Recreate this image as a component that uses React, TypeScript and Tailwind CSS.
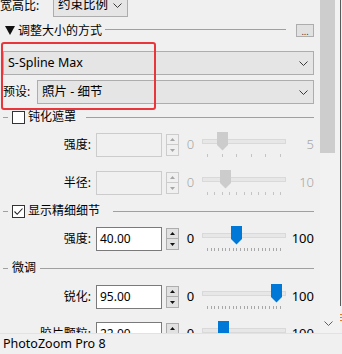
import React from 'react';

const FONT = "font-['Noto_Sans','Noto_Sans_CJK_SC',sans-serif]";

function Chevron({ color = '#3a3a3a' }: { color?: string }) {
  return (
    <svg width="9" height="5" viewBox="0 0 9 5" className="shrink-0">
      <path d="M0.5 0.5 L4.5 4.5 L8.5 0.5" fill="none" stroke={color} strokeWidth="1" />
    </svg>
  );
}

function Select({ text, className = '' }: { text: string; className?: string }) {
  return (
    <div className={`flex items-center border border-[#adadad] bg-[#e5e5e5] pl-[4px] pr-[5px] ${className}`}>
      <span className="flex-1 truncate text-[12.5px] text-black">{text}</span>
      <Chevron />
    </div>
  );
}

function Checkbox({ checked }: { checked?: boolean }) {
  return (
    <div className="w-[13px] h-[13px] shrink-0 border border-[#333] bg-white flex items-center justify-center">
      {checked && (
        <svg width="11" height="11" viewBox="0 0 11 11">
          <path d="M1.5 5.5 L4.2 8.3 L9.5 2.5" fill="none" stroke="#222" strokeWidth="1.1" />
        </svg>
      )}
    </div>
  );
}

function Group({ label, checkbox, checked, gap, className = '' }: { label: string; checkbox?: boolean; checked?: boolean; gap: string; className?: string }) {
  return (
    <div className={`flex items-center h-[14px] ${className}`}>
      <div className="ml-[3px] w-[5px] h-px bg-[#a0a0a0] shrink-0" />
      {checkbox ? (
        <>
          <div className="ml-[4px]">
            <Checkbox checked={checked} />
          </div>
          <span className="ml-[3px] text-[12px] text-black whitespace-nowrap">{label}</span>
        </>
      ) : (
        <span className="ml-[4px] text-[12px] text-black whitespace-nowrap">{label}</span>
      )}
      <div className={`${gap} flex-1 h-px bg-[#a0a0a0]`} />
    </div>
  );
}

function Spinner({ disabled }: { disabled?: boolean }) {
  const border = disabled ? 'border-[#cccccc] bg-[#f0f0f0]' : 'border-[#adadad] bg-[#e1e1e1]';
  const fill = disabled ? '#a6a6a6' : '#111';
  return (
    <div className="ml-[4px] w-[13px] h-[22px] flex flex-col shrink-0">
      <div className={`h-[11px] border ${border} flex items-center justify-center`}>
        <svg width="5" height="3" viewBox="0 0 5 3">
          <polygon points="2.5,0 5,3 0,3" fill={fill} />
        </svg>
      </div>
      <div className={`h-[11px] border border-t-0 ${border} flex items-center justify-center`}>
        <svg width="5" height="3" viewBox="0 0 5 3">
          <polygon points="0,0 5,0 2.5,3" fill={fill} />
        </svg>
      </div>
    </div>
  );
}

interface SliderRowProps {
  label: string;
  value: string;
  disabled?: boolean;
  max: number;
  val: number;
  ticks: number;
  className?: string;
}

function SliderRow({ label, value, disabled, max, val, ticks, className = '' }: SliderRowProps) {
  const thumbLeft = (val / max) * 73;
  const thumbColor = disabled ? '#cccccc' : '#0078d7';
  const numColor = disabled ? 'text-[#a6a6a6] font-light' : 'text-black';
  return (
    <div className={`flex items-center h-[24px] ${className}`}>
      <span className="w-[91px] shrink-0 text-right text-[12px] text-black whitespace-nowrap">{label}</span>
      <div
        className={`ml-[5px] w-[66px] h-[24px] shrink-0 flex items-center pl-[3px] text-[12px] text-black border ${
          disabled ? 'border-[#cccccc] bg-[#f0f0f0]' : 'border-[#7a7a7a] bg-white'
        }`}
      >
        {value}
      </div>
      <Spinner disabled={disabled} />
      <span className={`w-[23px] shrink-0 text-center text-[13px] ${numColor}`}>0</span>
      <div className="relative w-[84px] h-[24px] shrink-0">
        <div className="absolute left-0 right-0 top-[6px] h-[5px] bg-[#e7e7e7] border border-[#d9d9d9]" />
        {Array.from({ length: ticks + 1 }).map((_, i) => (
          <div
            key={i}
            className={`absolute top-[21px] w-px h-[3px] ${disabled ? 'bg-[#c4c4c4]' : 'bg-[#a8a8a8]'}`}
            style={{ left: 5 + (i / ticks) * 73 }}
          />
        ))}
        <svg
          width="11"
          height="19"
          viewBox="0 0 11 19"
          className="absolute top-[-1px]"
          style={{ left: thumbLeft }}
        >
          <path d="M0 0 H11 V13 L5.5 18.5 L0 13 Z" fill={thumbColor} />
        </svg>
      </div>
      <span className={`flex-1 text-right text-[13px] ${numColor}`}>{max}</span>
    </div>
  );
}

export default function App() {
  return (
    <div className={`w-[342px] h-[354px] bg-[#f0f0f0] flex flex-col overflow-hidden ${FONT}`}>
      <div className="flex h-[333px] shrink-0">
        {/* main panel */}
        <div className="relative w-[320px] h-full overflow-hidden">
          <div className="pr-[6px] -mt-[6px]">
            {/* aspect row */}
            <div className="flex items-center h-[23px]">
              <span className="w-[53px] text-[12px] text-black whitespace-nowrap">宽高比:</span>
              <Select text="约束比例" className="w-[75px] h-[23px]" />
            </div>

            {/* resize method heading */}
            <div className="flex items-center h-[17px] mt-[5px]">
              <svg width="10" height="9" viewBox="0 0 10 9" className="ml-[5px] shrink-0">
                <polygon points="0,0 10,0 5,9" fill="#111" />
              </svg>
              <span className="ml-[3px] text-[12px] text-black whitespace-nowrap">调整大小的方式</span>
              <div className="ml-[3px] mr-[10px] mb-[3px] flex-1 h-px bg-[#a0a0a0]" />
              <div className="w-[18px] h-[13px] border border-[#adadad] bg-[#e1e1e1] flex items-end justify-center">
                <span className="text-[9px] leading-[9px] text-[#333]">...</span>
              </div>
            </div>

            <div className="pl-[3px] mt-[12px]">
              <Select text="S-Spline Max" className="h-[24px]" />
            </div>

            <div className="flex items-center pl-[3px] mt-[5px]">
              <span className="w-[34px] text-[12px] text-black whitespace-nowrap">预设:</span>
              <Select text="照片 - 细节" className="flex-1 h-[24px]" />
            </div>

            <Group label="钝化遮罩" checkbox gap="ml-[10px]" className="mt-[6px]" />
            <SliderRow label="强度:" value="" disabled max={5} val={1} ticks={5} className="mt-[9px]" />
            <SliderRow label="半径:" value="" disabled max={10} val={2.5} ticks={10} className="mt-[14px]" />

            <Group label="显示精细细节" checkbox checked gap="ml-[13px]" className="mt-[9px]" />
            <SliderRow label="强度:" value="40.00" max={100} val={40} ticks={20} className="mt-[9px]" />

            <Group label="微调" gap="ml-[4px]" className="mt-[10px]" />
            <SliderRow label="锐化:" value="95.00" max={100} val={95} ticks={20} className="mt-[10px]" />
            <SliderRow label="胶片颗粒:" value="22.00" max={100} val={22} ticks={20} className="mt-[13px]" />
          </div>

          {/* red annotation box */}
          <div className="absolute left-[1px] top-[42px] w-[155px] h-[68px] border-2 border-[#e8363b] rounded-[3px]" />
        </div>

        {/* scrollbar */}
        <div className="w-[20px] h-full flex flex-col bg-[#f2f2f2]">
          <div className="w-[15px] h-[153px] bg-[#cdcdcd]" />
          <div className="flex-1" />
          <div className="h-[20px] w-[17px] flex items-center justify-center">
            <Chevron color="#606060" />
          </div>
        </div>

        {/* edge of window behind */}
        <div className="w-[2px] h-full flex flex-col">
          <div className="h-[306px] border-l border-[#5a5a5a]" />
          <div className="mt-[8px] flex flex-col gap-[2px]">
            <div className="h-px w-[2px] bg-[#e07a2a]" />
            <div className="h-px w-[2px] bg-[#e07a2a]" />
            <div className="h-px w-[2px] bg-[#e07a2a]" />
          </div>
        </div>
      </div>

      {/* status bar */}
      <div className="flex-1 flex items-center pl-[3px] border-t border-[#e2e2e2]">
        <span className="text-[12.5px] text-black">PhotoZoom Pro 8</span>
      </div>
    </div>
  );
}
